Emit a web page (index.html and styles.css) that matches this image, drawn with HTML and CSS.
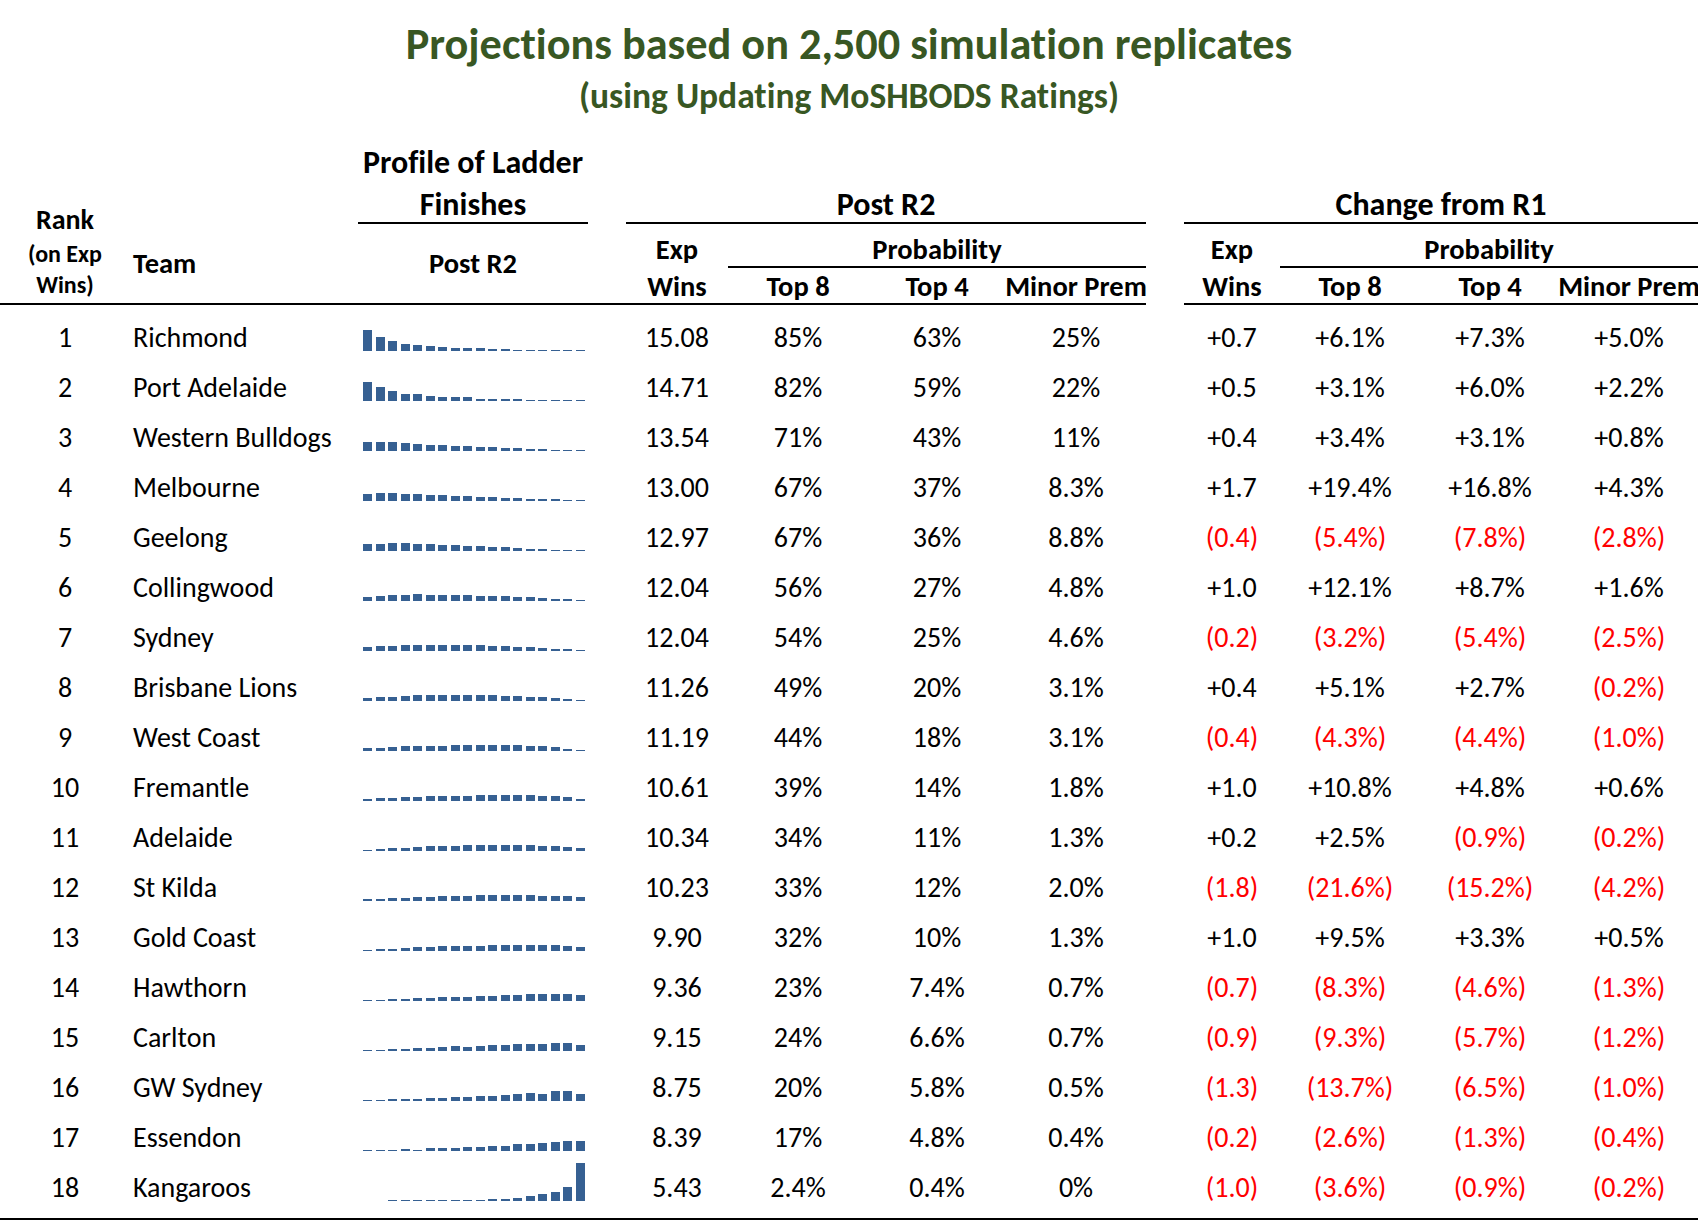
FILE: index.html
```html
<!DOCTYPE html>
<html lang="en">
<head>
<meta charset="utf-8">
<title>Projections based on 2,500 simulation replicates</title>
<link rel="stylesheet" href="styles.css">
</head>
<body>
<div class="page">
  <h1 class="title">Projections based on 2,500 simulation replicates</h1>
  <h2 class="subtitle">(using Updating MoSHBODS Ratings)</h2>

  <div class="thead">
    <div class="h h-prof">Profile of Ladder</div>
    <div class="h h-fin b2">Finishes</div>
    <div class="h h-post b2">Post R2</div>
    <div class="h h-chg b2">Change from R1</div>
    <div class="h h-rank b2">
      <span class="rk1">Rank</span>
      <span class="rk2">(on Exp</span>
      <span class="rk3">Wins)</span>
    </div>
    <div class="h h-team b2">Team</div>
    <div class="h h-sub b2">Post R2</div>
    <div class="h h-gap b2"></div>
    <div class="h h-exp1">Exp</div>
    <div class="h h-prob1 b2">Probability</div>
    <div class="h h-wins1 b2">Wins</div>
    <div class="h h-t81 b2">Top 8</div>
    <div class="h h-t41 b2">Top 4</div>
    <div class="h h-mp1 b2">Minor Prem</div>
    <div class="h h-exp2">Exp</div>
    <div class="h h-prob2 b2">Probability</div>
    <div class="h h-wins2 b2">Wins</div>
    <div class="h h-t82 b2">Top 8</div>
    <div class="h h-t42 b2">Top 4</div>
    <div class="h h-mp2 b2">Minor Prem</div>
  </div>

  <div class="tbody">
    <div class="row"><div>1</div><div class="team">Richmond</div><div class="spark"><i style="height:21px"></i><i style="height:14px"></i><i style="height:10px"></i><i style="height:7px"></i><i style="height:6px"></i><i style="height:5px"></i><i style="height:4px"></i><i style="height:3px"></i><i style="height:3px"></i><i style="height:3px"></i><i style="height:2px"></i><i style="height:2px"></i><i style="height:1px"></i><i style="height:1px"></i><i style="height:1px"></i><i style="height:1px"></i><i style="height:1px"></i><i style="height:1px"></i></div><div></div><div>15.08</div><div>85%</div><div>63%</div><div>25%</div><div></div><div>+0.7</div><div>+6.1%</div><div>+7.3%</div><div>+5.0%</div></div>

    <div class="row"><div>2</div><div class="team">Port Adelaide</div><div class="spark"><i style="height:19px"></i><i style="height:14px"></i><i style="height:10px"></i><i style="height:7px"></i><i style="height:7px"></i><i style="height:5px"></i><i style="height:4px"></i><i style="height:4px"></i><i style="height:4px"></i><i style="height:2px"></i><i style="height:2px"></i><i style="height:2px"></i><i style="height:2px"></i><i style="height:1px"></i><i style="height:1px"></i><i style="height:1px"></i><i style="height:1px"></i><i style="height:1px"></i></div><div></div><div>14.71</div><div>82%</div><div>59%</div><div>22%</div><div></div><div>+0.5</div><div>+3.1%</div><div>+6.0%</div><div>+2.2%</div></div>

    <div class="row"><div>3</div><div class="team">Western Bulldogs</div><div class="spark"><i style="height:9px"></i><i style="height:9px"></i><i style="height:9px"></i><i style="height:8px"></i><i style="height:7px"></i><i style="height:6px"></i><i style="height:6px"></i><i style="height:5px"></i><i style="height:5px"></i><i style="height:4px"></i><i style="height:4px"></i><i style="height:3px"></i><i style="height:3px"></i><i style="height:2px"></i><i style="height:2px"></i><i style="height:1px"></i><i style="height:1px"></i><i style="height:1px"></i></div><div></div><div>13.54</div><div>71%</div><div>43%</div><div>11%</div><div></div><div>+0.4</div><div>+3.4%</div><div>+3.1%</div><div>+0.8%</div></div>

    <div class="row"><div>4</div><div class="team">Melbourne</div><div class="spark"><i style="height:7px"></i><i style="height:8px"></i><i style="height:8px"></i><i style="height:7px"></i><i style="height:7px"></i><i style="height:6px"></i><i style="height:6px"></i><i style="height:5px"></i><i style="height:5px"></i><i style="height:4px"></i><i style="height:4px"></i><i style="height:3px"></i><i style="height:3px"></i><i style="height:2px"></i><i style="height:2px"></i><i style="height:2px"></i><i style="height:1px"></i><i style="height:1px"></i></div><div></div><div>13.00</div><div>67%</div><div>37%</div><div>8.3%</div><div></div><div>+1.7</div><div>+19.4%</div><div>+16.8%</div><div>+4.3%</div></div>

    <div class="row"><div>5</div><div class="team">Geelong</div><div class="spark"><i style="height:7px"></i><i style="height:7px"></i><i style="height:8px"></i><i style="height:8px"></i><i style="height:7px"></i><i style="height:7px"></i><i style="height:6px"></i><i style="height:6px"></i><i style="height:5px"></i><i style="height:5px"></i><i style="height:4px"></i><i style="height:4px"></i><i style="height:3px"></i><i style="height:2px"></i><i style="height:2px"></i><i style="height:1px"></i><i style="height:1px"></i><i style="height:1px"></i></div><div></div><div>12.97</div><div>67%</div><div>36%</div><div>8.8%</div><div></div><div class="n">(0.4)</div><div class="n">(5.4%)</div><div class="n">(7.8%)</div><div class="n">(2.8%)</div></div>

    <div class="row"><div>6</div><div class="team">Collingwood</div><div class="spark"><i style="height:4px"></i><i style="height:5px"></i><i style="height:6px"></i><i style="height:6px"></i><i style="height:7px"></i><i style="height:6px"></i><i style="height:6px"></i><i style="height:6px"></i><i style="height:6px"></i><i style="height:5px"></i><i style="height:5px"></i><i style="height:5px"></i><i style="height:4px"></i><i style="height:4px"></i><i style="height:3px"></i><i style="height:2px"></i><i style="height:2px"></i><i style="height:1px"></i></div><div></div><div>12.04</div><div>56%</div><div>27%</div><div>4.8%</div><div></div><div>+1.0</div><div>+12.1%</div><div>+8.7%</div><div>+1.6%</div></div>

    <div class="row"><div>7</div><div class="team">Sydney</div><div class="spark"><i style="height:4px"></i><i style="height:5px"></i><i style="height:5px"></i><i style="height:6px"></i><i style="height:6px"></i><i style="height:6px"></i><i style="height:6px"></i><i style="height:6px"></i><i style="height:6px"></i><i style="height:6px"></i><i style="height:5px"></i><i style="height:5px"></i><i style="height:4px"></i><i style="height:4px"></i><i style="height:3px"></i><i style="height:2px"></i><i style="height:2px"></i><i style="height:1px"></i></div><div></div><div>12.04</div><div>54%</div><div>25%</div><div>4.6%</div><div></div><div class="n">(0.2)</div><div class="n">(3.2%)</div><div class="n">(5.4%)</div><div class="n">(2.5%)</div></div>

    <div class="row"><div>8</div><div class="team">Brisbane Lions</div><div class="spark"><i style="height:3px"></i><i style="height:4px"></i><i style="height:4px"></i><i style="height:5px"></i><i style="height:6px"></i><i style="height:6px"></i><i style="height:6px"></i><i style="height:6px"></i><i style="height:6px"></i><i style="height:6px"></i><i style="height:6px"></i><i style="height:5px"></i><i style="height:5px"></i><i style="height:4px"></i><i style="height:4px"></i><i style="height:3px"></i><i style="height:2px"></i><i style="height:1px"></i></div><div></div><div>11.26</div><div>49%</div><div>20%</div><div>3.1%</div><div></div><div>+0.4</div><div>+5.1%</div><div>+2.7%</div><div class="n">(0.2%)</div></div>

    <div class="row"><div>9</div><div class="team">West Coast</div><div class="spark"><i style="height:3px"></i><i style="height:3px"></i><i style="height:4px"></i><i style="height:5px"></i><i style="height:5px"></i><i style="height:5px"></i><i style="height:5px"></i><i style="height:6px"></i><i style="height:6px"></i><i style="height:6px"></i><i style="height:6px"></i><i style="height:6px"></i><i style="height:6px"></i><i style="height:5px"></i><i style="height:5px"></i><i style="height:4px"></i><i style="height:2px"></i><i style="height:1px"></i></div><div></div><div>11.19</div><div>44%</div><div>18%</div><div>3.1%</div><div></div><div class="n">(0.4)</div><div class="n">(4.3%)</div><div class="n">(4.4%)</div><div class="n">(1.0%)</div></div>

    <div class="row"><div>10</div><div class="team">Fremantle</div><div class="spark"><i style="height:2px"></i><i style="height:3px"></i><i style="height:3px"></i><i style="height:4px"></i><i style="height:4px"></i><i style="height:5px"></i><i style="height:5px"></i><i style="height:5px"></i><i style="height:5px"></i><i style="height:6px"></i><i style="height:6px"></i><i style="height:6px"></i><i style="height:6px"></i><i style="height:6px"></i><i style="height:5px"></i><i style="height:5px"></i><i style="height:4px"></i><i style="height:2px"></i></div><div></div><div>10.61</div><div>39%</div><div>14%</div><div>1.8%</div><div></div><div>+1.0</div><div>+10.8%</div><div>+4.8%</div><div>+0.6%</div></div>

    <div class="row"><div>11</div><div class="team">Adelaide</div><div class="spark"><i style="height:1px"></i><i style="height:2px"></i><i style="height:3px"></i><i style="height:3px"></i><i style="height:4px"></i><i style="height:5px"></i><i style="height:5px"></i><i style="height:5px"></i><i style="height:6px"></i><i style="height:6px"></i><i style="height:6px"></i><i style="height:6px"></i><i style="height:6px"></i><i style="height:6px"></i><i style="height:5px"></i><i style="height:5px"></i><i style="height:4px"></i><i style="height:3px"></i></div><div></div><div>10.34</div><div>34%</div><div>11%</div><div>1.3%</div><div></div><div>+0.2</div><div>+2.5%</div><div class="n">(0.9%)</div><div class="n">(0.2%)</div></div>

    <div class="row"><div>12</div><div class="team">St Kilda</div><div class="spark"><i style="height:2px"></i><i style="height:2px"></i><i style="height:3px"></i><i style="height:3px"></i><i style="height:4px"></i><i style="height:4px"></i><i style="height:5px"></i><i style="height:5px"></i><i style="height:5px"></i><i style="height:6px"></i><i style="height:6px"></i><i style="height:6px"></i><i style="height:6px"></i><i style="height:6px"></i><i style="height:5px"></i><i style="height:5px"></i><i style="height:5px"></i><i style="height:4px"></i></div><div></div><div>10.23</div><div>33%</div><div>12%</div><div>2.0%</div><div></div><div class="n">(1.8)</div><div class="n">(21.6%)</div><div class="n">(15.2%)</div><div class="n">(4.2%)</div></div>

    <div class="row"><div>13</div><div class="team">Gold Coast</div><div class="spark"><i style="height:1px"></i><i style="height:2px"></i><i style="height:2px"></i><i style="height:3px"></i><i style="height:4px"></i><i style="height:4px"></i><i style="height:5px"></i><i style="height:5px"></i><i style="height:5px"></i><i style="height:5px"></i><i style="height:6px"></i><i style="height:6px"></i><i style="height:6px"></i><i style="height:6px"></i><i style="height:6px"></i><i style="height:6px"></i><i style="height:5px"></i><i style="height:4px"></i></div><div></div><div>9.90</div><div>32%</div><div>10%</div><div>1.3%</div><div></div><div>+1.0</div><div>+9.5%</div><div>+3.3%</div><div>+0.5%</div></div>

    <div class="row"><div>14</div><div class="team">Hawthorn</div><div class="spark"><i style="height:1px"></i><i style="height:1px"></i><i style="height:2px"></i><i style="height:2px"></i><i style="height:3px"></i><i style="height:3px"></i><i style="height:4px"></i><i style="height:4px"></i><i style="height:4px"></i><i style="height:5px"></i><i style="height:5px"></i><i style="height:6px"></i><i style="height:6px"></i><i style="height:7px"></i><i style="height:7px"></i><i style="height:7px"></i><i style="height:7px"></i><i style="height:6px"></i></div><div></div><div>9.36</div><div>23%</div><div>7.4%</div><div>0.7%</div><div></div><div class="n">(0.7)</div><div class="n">(8.3%)</div><div class="n">(4.6%)</div><div class="n">(1.3%)</div></div>

    <div class="row"><div>15</div><div class="team">Carlton</div><div class="spark"><i style="height:1px"></i><i style="height:1px"></i><i style="height:2px"></i><i style="height:2px"></i><i style="height:3px"></i><i style="height:3px"></i><i style="height:4px"></i><i style="height:5px"></i><i style="height:4px"></i><i style="height:5px"></i><i style="height:6px"></i><i style="height:6px"></i><i style="height:7px"></i><i style="height:7px"></i><i style="height:7px"></i><i style="height:8px"></i><i style="height:8px"></i><i style="height:6px"></i></div><div></div><div>9.15</div><div>24%</div><div>6.6%</div><div>0.7%</div><div></div><div class="n">(0.9)</div><div class="n">(9.3%)</div><div class="n">(5.7%)</div><div class="n">(1.2%)</div></div>

    <div class="row"><div>16</div><div class="team">GW Sydney</div><div class="spark"><i style="height:1px"></i><i style="height:1px"></i><i style="height:2px"></i><i style="height:2px"></i><i style="height:2px"></i><i style="height:3px"></i><i style="height:3px"></i><i style="height:4px"></i><i style="height:4px"></i><i style="height:5px"></i><i style="height:5px"></i><i style="height:6px"></i><i style="height:7px"></i><i style="height:8px"></i><i style="height:7px"></i><i style="height:10px"></i><i style="height:10px"></i><i style="height:7px"></i></div><div></div><div>8.75</div><div>20%</div><div>5.8%</div><div>0.5%</div><div></div><div class="n">(1.3)</div><div class="n">(13.7%)</div><div class="n">(6.5%)</div><div class="n">(1.0%)</div></div>

    <div class="row"><div>17</div><div class="team">Essendon</div><div class="spark"><i style="height:1px"></i><i style="height:1px"></i><i style="height:1px"></i><i style="height:2px"></i><i style="height:1px"></i><i style="height:3px"></i><i style="height:3px"></i><i style="height:3px"></i><i style="height:4px"></i><i style="height:4px"></i><i style="height:5px"></i><i style="height:5px"></i><i style="height:7px"></i><i style="height:7px"></i><i style="height:8px"></i><i style="height:9px"></i><i style="height:10px"></i><i style="height:10px"></i></div><div></div><div>8.39</div><div>17%</div><div>4.8%</div><div>0.4%</div><div></div><div class="n">(0.2)</div><div class="n">(2.6%)</div><div class="n">(1.3%)</div><div class="n">(0.4%)</div></div>

    <div class="row"><div>18</div><div class="team">Kangaroos</div><div class="spark"><i style="height:0"></i><i style="height:0"></i><i style="height:1px"></i><i style="height:1px"></i><i style="height:1px"></i><i style="height:1px"></i><i style="height:1px"></i><i style="height:1px"></i><i style="height:1px"></i><i style="height:1px"></i><i style="height:2px"></i><i style="height:2px"></i><i style="height:3px"></i><i style="height:5px"></i><i style="height:7px"></i><i style="height:9px"></i><i style="height:14px"></i><i style="height:38px"></i></div><div></div><div>5.43</div><div>2.4%</div><div>0.4%</div><div>0%</div><div></div><div class="n">(1.0)</div><div class="n">(3.6%)</div><div class="n">(0.9%)</div><div class="n">(0.2%)</div></div>
  </div>
</div>
</body>
</html>
```

FILE: styles.css
```css
:root {
  --cols: 130px 228px 230px 38px 102px 140px 138px 140px 38px 96px 140px 140px 138px;
}

html, body {
  margin: 0;
  padding: 0;
  background: #ffffff;
}

body {
  font-family: Carlito, Lato, "Liberation Sans", sans-serif;
  font-variant-ligatures: no-common-ligatures;
  color: #000000;
  overflow: hidden;
}

.page {
  padding-top: 19px;
  width: 1698px;
}

.title {
  margin: 0;
  text-align: center;
  font-size: 44.3px;
  line-height: 50px;
  font-weight: 700;
  color: #385723;
}

.subtitle {
  margin: 7px 0 3px;
  text-align: center;
  font-size: 35.5px;
  line-height: 40px;
  font-weight: 700;
  color: #385723;
}

/* ---------- header ---------- */
.thead {
  display: grid;
  grid-template-columns: var(--cols);
  grid-template-rows: 61px 44px 44px 37px;
}

.h {
  display: flex;
  align-items: flex-end;
  justify-content: center;
  font-weight: 700;
  font-size: 28.5px;
  line-height: 1;
  padding-bottom: 2px;
  white-space: nowrap;
}

.b2 { border-bottom: 2px solid #000; }

.h-prof { grid-column: 3; grid-row: 1; font-size: 32px; padding-bottom: 1.5px; }
.h-fin  { grid-column: 3; grid-row: 2; font-size: 32px; padding-bottom: 1.5px; }
.h-post { grid-column: 5 / span 4; grid-row: 2; font-size: 32px; padding-bottom: 1.5px; }
.h-chg  { grid-column: 10 / span 4; grid-row: 2; font-size: 32px; padding-bottom: 1.5px; }

.h-rank {
  grid-column: 1;
  grid-row: 2 / 5;
  flex-direction: column;
  align-items: center;
  justify-content: flex-end;
  padding-bottom: 2px;
}
.rk1 { font-size: 28px; line-height: 38px; }
.rk2 { font-size: 24px; line-height: 30px; }
.rk3 { font-size: 24px; line-height: 32px; }

.h-team {
  grid-column: 2;
  grid-row: 3 / 5;
  justify-content: flex-start;
  padding-left: 3px;
  padding-bottom: 25px;
}
.h-sub { grid-column: 3; grid-row: 3 / 5; padding-bottom: 25px; }
.h-gap { grid-column: 4; grid-row: 3 / 5; }

.h-exp1  { grid-column: 5; grid-row: 3; padding-bottom: 4px; }
.h-prob1 { grid-column: 6 / span 3; grid-row: 3; padding-bottom: 2px; }
.h-wins1 { grid-column: 5; grid-row: 4; }
.h-t81   { grid-column: 6; grid-row: 4; }
.h-t41   { grid-column: 7; grid-row: 4; }
.h-mp1   { grid-column: 8; grid-row: 4; }

.h-exp2  { grid-column: 10; grid-row: 3; padding-bottom: 4px; }
.h-prob2 { grid-column: 11 / span 3; grid-row: 3; padding-bottom: 2px; }
.h-wins2 { grid-column: 10; grid-row: 4; }
.h-t82   { grid-column: 11; grid-row: 4; }
.h-t42   { grid-column: 12; grid-row: 4; }
.h-mp2   { grid-column: 13; grid-row: 4; }

/* ---------- body ---------- */
.tbody {
  margin-top: 13px;
  border-bottom: 2px solid #000;
}

.row {
  display: grid;
  grid-template-columns: var(--cols);
  height: 50px;
  font-size: 28px;
  line-height: 28px;
}

.row > div {
  padding-top: 6px;
  text-align: center;
  white-space: nowrap;
}

.row > .team {
  text-align: left;
  padding-left: 3px;
}

.row > .spark {
  padding: 0 0 0 5px;
  height: 33px;
  box-sizing: border-box;
  display: flex;
  align-items: flex-end;
  gap: 3.5px;
}

.spark i {
  display: block;
  flex: none;
  width: 9px;
  background: #366092;
}

.n { color: #ff0000; }
```
